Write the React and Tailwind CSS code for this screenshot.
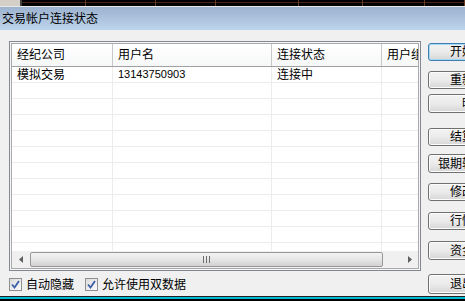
import React from "react";

const FONT = { fontFamily: '"Liberation Sans", "Noto Sans CJK SC", sans-serif' };

const columns = [
  { title: "经纪公司", w: "w-[101px]" },
  { title: "用户名", w: "w-[159px]" },
  { title: "连接状态", w: "w-[110px]" },
  { title: "用户组", w: "w-[60px]" },
];

const rows = [["模拟交易", "13143750903", "连接中", ""]];

const buttons = [
  { label: "开始连接", mt: "mt-[13px]", h: "h-[18px]", focus: true },
  { label: "重新连接", mt: "mt-[10px]", h: "h-[18px]" },
  { label: "明细", mt: "mt-[5px]", h: "h-[19px]" },
  { label: "结算确认", mt: "mt-[15px]", h: "h-[18px]" },
  { label: "银期转账查询", mt: "mt-[8px]", h: "h-[19px]" },
  { label: "修改密码", mt: "mt-[10px]", h: "h-[18px]" },
  { label: "行情设置", mt: "mt-[11px]", h: "h-[18px]" },
  { label: "资金账户", mt: "mt-[11px]", h: "h-[19px]" },
  { label: "退出系统", mt: "mt-[14px]", h: "h-[20px]" },
];

const Checkbox = ({ label }) => (
  <div className="flex items-center gap-[4px]">
    <div className="w-[13px] h-[13px] border border-[#8e8f8f] bg-gradient-to-br from-[#dcdcdc] to-[#fbfbfb] flex items-center justify-center">
      <svg width="9" height="9" viewBox="0 0 9 9">
        <path d="M1 4.5 L3.5 7.5 L8 1" stroke="#3c5fa8" strokeWidth="1.8" fill="none" />
      </svg>
    </div>
    <span className="text-[12px] text-black leading-none">{label}</span>
  </div>
);

const App = () => {
  return (
    <div className="w-[465px] h-[301px] overflow-hidden flex flex-col bg-[#f0f0f0]" style={FONT}>
      {/* strip of the window underneath */}
      <div className="h-[6px] flex bg-black shrink-0">
        <div className="w-[33px] bg-[#d4d0c8] border-r-2 border-[#404040]" />
        <div className="flex-1 flex">
          {[64, 70, 60, 83, 64, 62, 40].map((w, i) => (
            <div key={i} style={{ width: w }} className="h-[6px] border-r border-[#6b3a22] flex flex-col">
              <div className="h-[2px]" />
              <div className="h-[1px] bg-[#4a2418]" />
            </div>
          ))}
        </div>
      </div>
      <div className="h-[1px] bg-[#e8e8e8] shrink-0" />

      {/* title bar */}
      <div className="h-[23px] shrink-0 bg-gradient-to-b from-[#9cb2ce] to-[#bdd4ed] flex items-center pl-[2px]">
        <span className="text-[12px] text-black">交易帐户连接状态</span>
      </div>

      {/* body */}
      <div className="h-[266px] shrink-0 flex">
        <div className="w-[428px] shrink-0 flex flex-col pl-[9px] pt-[11px]">
          <div className="w-[412px] h-[230px] border border-[#828790] p-[1px] bg-[#f7f7f7]">
            <div className="h-full border border-[#a9a9a9] bg-white flex flex-col overflow-hidden">
              {/* header */}
              <div className="h-[23px] flex border-b border-[#a0a0a0] bg-gradient-to-b from-white to-[#f6f7f8] shrink-0">
                {columns.map((c, i) => (
                  <div
                    key={i}
                    className={`${c.w} shrink-0 h-full flex items-center pl-[5px] border-r border-[#c8c8c8] text-[12px] text-black whitespace-nowrap overflow-hidden`}
                  >
                    {c.title}
                  </div>
                ))}
              </div>
              {/* rows */}
              <div className="flex-1 overflow-hidden">
                {Array.from({ length: 12 }).map((_, r) => (
                  <div key={r} className="h-[16px] flex border-b border-[#ececec]">
                    {columns.map((c, i) => (
                      <div
                        key={i}
                        className={`${c.w} shrink-0 h-full flex items-center pl-[5px] border-r border-[#ececec] text-black whitespace-nowrap overflow-hidden`}
                      >
                        {rows[r] ? (
                          i === 1 ? (
                            <span className="text-[11px]">{rows[r][i]}</span>
                          ) : (
                            <span className="text-[12px]">{rows[r][i]}</span>
                          )
                        ) : null}
                      </div>
                    ))}
                  </div>
                ))}
              </div>
              {/* horizontal scrollbar */}
              <div className="h-[17px] shrink-0 bg-[#f0f0f0] flex items-center">
                <div className="w-[17px] h-full flex items-center justify-center">
                  <svg width="4" height="7" viewBox="0 0 4 7">
                    <path d="M4 0 L0 3.5 L4 7 Z" fill="#606060" />
                  </svg>
                </div>
                <div className="w-[353px] h-[15px] ml-[1px] rounded-[2px] border border-[#979797] bg-gradient-to-b from-[#f3f3f3] via-[#e6e6e6] to-[#d2d2d2] flex items-center justify-center">
                  <div className="flex gap-[2px]">
                    <div className="w-[1px] h-[7px] bg-[#6d6d6d]" />
                    <div className="w-[1px] h-[7px] bg-[#6d6d6d]" />
                    <div className="w-[1px] h-[7px] bg-[#6d6d6d]" />
                  </div>
                </div>
                <div className="flex-1" />
                <div className="w-[17px] h-full flex items-center justify-center">
                  <svg width="4" height="7" viewBox="0 0 4 7">
                    <path d="M0 0 L4 3.5 L0 7 Z" fill="#606060" />
                  </svg>
                </div>
              </div>
            </div>
          </div>
          <div className="flex items-center mt-[7px] gap-[11px]">
            <Checkbox label="自动隐藏" />
            <Checkbox label="允许使用双数据" />
          </div>
        </div>

        {/* buttons */}
        <div className="flex flex-col shrink-0">
          {buttons.map((b, i) => (
            <div
              key={i}
              className={`${b.mt} ${b.h} w-[92px] shrink-0 rounded-[3px] border ${
                b.focus ? "border-[#3c7fb1] shadow-[inset_0_0_0_1px_#a6d8f5]" : "border-[#707070] shadow-[inset_0_0_0_1px_#fcfcfc]"
              } bg-gradient-to-b from-[#f2f2f2] via-[#ebebeb] to-[#d6d6d6] flex items-center justify-center text-[12px] text-black whitespace-nowrap`}
            >
              {b.label}
            </div>
          ))}
        </div>
      </div>

      {/* strip below */}
      <div className="h-[1px] bg-[#202020] shrink-0" />
      <div className="h-[2px] bg-[#00b8d8] shrink-0" />
      <div className="flex-1 bg-black" />
    </div>
  );
};

export default App;
